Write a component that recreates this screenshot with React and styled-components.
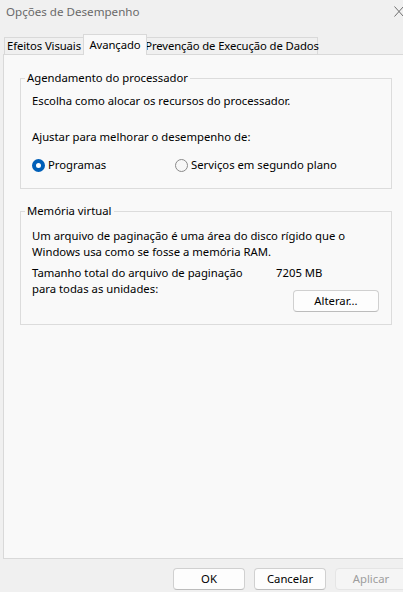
import React from 'react'
import styled, { createGlobalStyle } from 'styled-components'

/* GLOBAL */
const GlobalStyle = createGlobalStyle`
  html, body {
    margin: 0;
    padding: 0;
    background: #f0f0f0;
  }
  body {
    font-family: "Noto Sans", "Open Sans", sans-serif;
    font-size: 11.3px;
    line-height: 16px;
    color: #000;
  }
  * {
    box-sizing: border-box;
  }
`

/* STYLES */
const Window = styled.div`
  width: 403px;
  height: 592px;
  display: flex;
  flex-direction: column;
  overflow: hidden;
  background: #f0f0f0;
`

const TitleBar = styled.div`
  height: 24px;
  flex: none;
  display: flex;
  align-items: center;
  justify-content: space-between;
  padding: 0 0 0 6px;
`

const Title = styled.span`
  color: #6a6a6a;
  font-size: 11.6px;
`

const CloseIcon = styled.svg`
  width: 10px;
  height: 11px;
  margin-right: -1px;
  margin-top: -2px;
`

const TabRow = styled.div`
  height: 30px;
  flex: none;
  display: flex;
  align-items: flex-end;
  padding-left: 4px;
`

const Tab = styled.div`
  position: relative;
  width: ${p => p.$w}px;
  height: ${p => (p.$active ? 21 : 17)}px;
  margin-bottom: ${p => (p.$active ? -1 : 0)}px;
  margin-left: ${p => (p.$first ? 0 : -1)}px;
  display: flex;
  align-items: center;
  justify-content: center;
  border: 1px solid #d9d9d9;
  border-bottom: none;
  background: ${p => (p.$active ? '#f9f9f9' : '#f0f0f0')};
  z-index: ${p => (p.$active ? 1 : 0)};
  white-space: nowrap;
  letter-spacing: -0.1px;
`

const Panel = styled.div`
  flex: 1;
  margin-left: 3px;
  margin-right: -5px;
  border: 1px solid #d9d9d9;
  background: #f9f9f9;
  padding: 15px 15px 0 16px;
  display: flex;
  flex-direction: column;
  gap: 14px;
`

const Group = styled.fieldset`
  margin: 0;
  border: 1px solid #dcdcdc;
  padding: 0 12px 12px 11px;
  min-width: 0;
`

const Legend = styled.legend`
  margin-left: -7px;
  padding: 0 2px;
`

const Text = styled.div`
  margin-top: ${p => p.$mt || 0}px;
  white-space: nowrap;
`

const RadioRow = styled.div`
  display: flex;
  margin-top: 12px;
  margin-bottom: 3px;
`

const RadioOption = styled.label`
  display: flex;
  align-items: center;
  gap: 3px;
  width: ${p => p.$w}px;
`

const RadioDot = styled.span`
  width: 13px;
  height: 13px;
  border-radius: 50%;
  flex: none;
  box-sizing: border-box;
  ${p =>
    p.$checked
      ? `background: #fff; border: 4px solid #005fb8;`
      : `background: #f7f7f7; border: 1px solid #8a8a8a;`}
`

const SizeRow = styled.div`
  display: flex;
  margin-top: 5px;
`

const SizeLabel = styled.div`
  width: 243px;
  flex: none;
  white-space: nowrap;
`

const SizeSide = styled.div`
  flex: 1;
  display: flex;
  flex-direction: column;
  padding-left: 1px;
`

const Button = styled.button`
  width: ${p => p.$w || 72}px;
  height: 22px;
  font: inherit;
  line-height: 16px;
  color: ${p => (p.disabled ? '#9d9d9d' : '#000')};
  background: ${p => (p.disabled ? '#f5f5f5' : '#fdfdfd')};
  border: 1px solid ${p => (p.disabled ? '#e5e5e5' : '#d0d0d0')};
  border-bottom-color: ${p => (p.disabled ? '#e5e5e5' : '#bcbcbc')};
  border-radius: 4px;
  padding: 0;
`

const ChangeButton = styled(Button)`
  align-self: flex-end;
  margin-top: 9px;
`

const Footer = styled.div`
  height: 33px;
  flex: none;
  display: flex;
  justify-content: flex-end;
  align-items: flex-start;
  gap: 9px;
  padding-top: 9px;
  margin-right: -4px;
`

/* PRESENTATION */
export default function App() {
  return (
    <>
      <GlobalStyle />
      <Window>
        <TitleBar>
          <Title>Opções de Desempenho</Title>
          <CloseIcon viewBox="0 0 10 11">
            <path d="M0.5 0.5 L9.5 10.5 M9.5 0.5 L0.5 10.5" stroke="#6f6f6f" strokeWidth="1" fill="none" />
          </CloseIcon>
        </TitleBar>

        <TabRow>
          <Tab $w={80} $first>Efeitos Visuais</Tab>
          <Tab $w={64} $active>Avançado</Tab>
          <Tab $w={172}>Prevenção de Execução de Dados</Tab>
        </TabRow>

        <Panel>
          <Group>
            <Legend>Agendamento do processador</Legend>
            <Text $mt={7}>Escolha como alocar os recursos do processador.</Text>
            <Text $mt={20}>Ajustar para melhorar o desempenho de:</Text>
            <RadioRow>
              <RadioOption $w={143}>
                <RadioDot $checked />
                Programas
              </RadioOption>
              <RadioOption>
                <RadioDot />
                Serviços em segundo plano
              </RadioOption>
            </RadioRow>
          </Group>

          <Group>
            <Legend>Memória virtual</Legend>
            <Text $mt={9}>
              Um arquivo de paginação é uma área do disco rígido que o
              <br />
              Windows usa como se fosse a memória RAM.
            </Text>
            <SizeRow>
              <SizeLabel>
                Tamanho total do arquivo de paginação
                <br />
                para todas as unidades:
              </SizeLabel>
              <SizeSide>
                <span>7205 MB</span>
                <ChangeButton $w={86}>Alterar...</ChangeButton>
              </SizeSide>
            </SizeRow>
          </Group>
        </Panel>

        <Footer>
          <Button>OK</Button>
          <Button>Cancelar</Button>
          <Button disabled>Aplicar</Button>
        </Footer>
      </Window>
    </>
  )
}
